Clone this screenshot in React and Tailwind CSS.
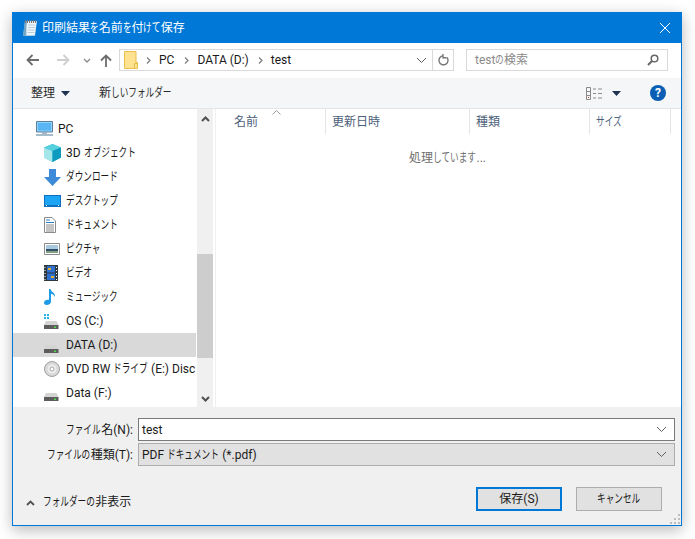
import React from "react"

const font = { fontFamily: 'Roboto, "Noto Sans CJK JP", sans-serif' }

// kana in the dialog's font are much narrower than in Noto, so squeeze only those runs
const Jp = ({text}) => (
    <span className="whitespace-nowrap">
        {text.split(/([\u3040-\u30ff]+)/).map((part, i) =>
            i % 2 === 1 ? (
                <span key={i} className="inline-block" style={{width: part.length * 8.7}}>
                    <span className="inline-block origin-left scale-x-[0.72]">{part}</span>
                </span>
            ) : (
                part
            )
        )}
    </span>
)

const NotepadIcon = () => (
    <svg width="16" height="18" viewBox="0 0 16 18">
        <path d="M3 2h12l-2 15H1z" fill="#a9cfe4"/>
        <path d="M3.5 2.5h11l-1.700 13.500H5z" fill="#eef4f8"/>
        <path d="M1 17 3 2h2L3.500 17z" fill="#6fa3c4"/>
        <path d="M6 6h7M6 8.500h7M5.500 11h7M5.500 13.500h7" stroke="#b9cfdd" strokeWidth="1"/>
        <path d="M3.500 1v3M5.500 1v3M7.500 1v3M9.500 1v3M11.500 1v3M13.500 1v3" stroke="#777" strokeWidth="1"/>
    </svg>
)

const FolderIcon = () => (
    <svg width="14" height="18" viewBox="0 0 14 18">
        <path d="M.5.500h11.500v11l1.500 0v6H.500z" fill="#ffe28f" stroke="#e7bf4a"/>
        <path d="M10.500 17.500v-5h3" fill="none" stroke="#e7bf4a"/>
    </svg>
)

const DriveIcon = ({win}) => (
    <svg width="16" height="16" viewBox="0 0 16 16">
        {win && <path d="M0 1h2v2H0zM3 1h2v2H3zM0 4h2v2H0zM3 4h2v2H3z" fill="#25b4e8"/>}
        <path d="M2 8h10.500l2 4H0z" fill="#d4d4d4"/>
        <path d="M0 12h14.500v4H0z" fill="#5c5c5c"/>
        <path d="M10 13.500h2v1.500h-2z" fill="#4be04b"/>
    </svg>
)

const icons = {
    pc: (
        <svg width="18" height="16" viewBox="0 0 18 16">
            <path d="M.5.500h16v10.500H.500z" fill="#8fd4fb" stroke="#5d7f99"/>
            <path d="M2 2h13v7.500H2z" fill="#5ab5f4"/>
            <path d="M6 11h5v2H6z" fill="#9fb4c4"/>
            <path d="M0 13h17v2H0z" fill="#a7bccb"/>
        </svg>
    ),
    cube: (
        <svg width="17" height="18" viewBox="0 0 17 18">
            <path d="M8.500 0 17 3.500v10L8.500 18 0 13.500v-10z" fill="#2bb6cf"/>
            <path d="M0 3.500 8.500 7v11L0 13.500z" fill="#a5e6ea"/>
            <path d="M8.500 0 17 3.500 8.500 7 0 3.500z" fill="#56d0dd"/>
            <path d="M17 3.500V13.500L8.500 18V7z" fill="#0f9bc0"/>
        </svg>
    ),
    down: (
        <svg width="17" height="17" viewBox="0 0 17 17">
            <path d="M5 0h7v8h5l-8.500 9L0 8h5z" fill="#3d8ad8"/>
        </svg>
    ),
    desktop: (
        <svg width="17" height="12" viewBox="0 0 17 12">
            <path d="M0 0h17v12H0z" fill="#0f6fc0"/>
            <path d="M1 1h15v9H1z" fill="#1ca5f5"/>
            <path d="M2 10.500h1M14 10.500h1" stroke="#fff"/>
        </svg>
    ),
    doc: (
        <svg width="12" height="16" viewBox="0 0 12 16">
            <path d="M.5.500H8L11.500 4v11.500H.500z" fill="#fff" stroke="#8a8a8a"/>
            <path d="M2 3h4M2 5.500h8" stroke="#2f7fc4"/>
            <path d="M2 8h8M2 10h8M2 12h8M2 14h8" stroke="#8a8a8a"/>
        </svg>
    ),
    pic: (
        <svg width="16" height="12" viewBox="0 0 16 12">
            <path d="M.5.500h15v11H.500z" fill="#fff" stroke="#8a8a8a"/>
            <path d="M2 2h12v4H2z" fill="#a8c8e0"/>
            <path d="M2 6h12v2H2z" fill="#30506a"/>
            <path d="M2 8h12v2H2z" fill="#7f9f80"/>
        </svg>
    ),
    video: (
        <svg width="14" height="16" viewBox="0 0 14 16">
            <path d="M0 0h14v16H0z" fill="#2f3a3f"/>
            <path d="M3 1h8v6.500H3z" fill="#2f6fd0"/>
            <path d="M3 8.500h8V15H3z" fill="#2f6fd0"/>
            <path d="M4 3h3v2H4zM7 11h3v2H7z" fill="#e0b030"/>
            <path d="M1 2v1M1 5v1M1 8v1M1 11v1M1 14v1M12.500 2v1M12.500 5v1M12.500 8v1M12.500 11v1M12.500 14v1" stroke="#fff"/>
        </svg>
    ),
    music: (
        <svg width="12" height="16" viewBox="0 0 12 16">
            <path d="M5 0h1.500c.5 3 5 3.500 4.500 8-.8-2-2.500-3-4-3.200V12.500C7 14.500 5 16 2.800 16 1 16 0 15 0 13.700 0 12 2 10.800 3.800 10.800c.5 0 .9.100 1.200.2z" fill="#1e9be8"/>
        </svg>
    ),
    os: <DriveIcon win/>,
    drive: <DriveIcon/>,
    dvd: (
        <svg width="16" height="16" viewBox="0 0 16 16">
            <circle cx="8" cy="8" r="7.500" fill="#d8d8d8" stroke="#a0a0a0"/>
            <circle cx="8" cy="8" r="4.500" fill="#ececec"/>
            <circle cx="8" cy="8" r="2" fill="#fff" stroke="#a8a8a8"/>
        </svg>
    ),
}

const navItems = [
    {label: "PC", icon: "pc", left: "pl-[23px]", gap: "w-[22px]"},
    {label: "3D オブジェクト", icon: "cube"},
    {label: "ダウンロード", icon: "down"},
    {label: "デスクトップ", icon: "desktop"},
    {label: "ドキュメント", icon: "doc"},
    {label: "ピクチャ", icon: "pic"},
    {label: "ビデオ", icon: "video"},
    {label: "ミュージック", icon: "music"},
    {label: "OS (C:)", icon: "os"},
    {label: "DATA (D:)", icon: "drive", selected: true},
    {label: "DVD RW ドライブ (E:) Disc", icon: "dvd"},
    {label: "Data (F:)", icon: "drive"},
]

const columns = [
    {label: "名前", width: "w-[110px]", pad: "pl-[18px]"},
    {label: "更新日時", width: "w-[144px]", pad: "pl-[6px]"},
    {label: "種類", width: "w-[120px]", pad: "pl-[6px]"},
    {label: "サイズ", width: "w-[81px]", pad: "pl-[6px]"},
]

const Chevron = ({className}) => (
    <svg width="11" height="7" viewBox="0 0 11 7" className={className}>
        <path d="M1 1l4.500 4.500L10 1" fill="none" stroke="#606060" strokeWidth="1"/>
    </svg>
)

const SmallCaret = () => (
    <svg width="9" height="5" viewBox="0 0 9 5"><path d="M0 0h9L4.500 5z" fill="#1f3252"/></svg>
)

const Sep = ({className}) => (
    <svg width="5" height="7" viewBox="0 0 5 7" className={className}>
        <path d="M1 .5l3 3-3 3" fill="none" stroke="#808080" strokeWidth="1.300"/>
    </svg>
)

const ScrollArrow = ({up}) => (
    <svg width="9" height="6" viewBox="0 0 9 6">
        <path d={up ? "M1 5l3.500-3.500L8 5" : "M1 1l3.500 3.500L8 1"} fill="none" stroke="#505050" strokeWidth="2"/>
    </svg>
)

export default function App() {
    return (
        <div className="w-[695px] h-[539px] bg-white pt-3 pl-3 overflow-hidden" style={font}>
            <div className="relative w-[670px] h-[514px] border border-[#0078d7] bg-[#f0f0f0] flex flex-col shadow-[0_4px_14px_rgba(0,0,0,0.28)] text-xs text-[#1a1a1a]">
                {/* title bar */}
                <div className="h-[30px] bg-[#0078d7] flex items-center pl-[9px] pr-[8px] text-white">
                    <NotepadIcon/>
                    <span className="ml-[4px]"><Jp text="印刷結果を名前を付けて保存"/></span>
                    <svg width="12" height="12" viewBox="0 0 12 12" className="ml-auto mr-[2px]">
                        <path d="M1 1l10 10M11 1 1 11" stroke="#fff" strokeWidth="1"/>
                    </svg>
                </div>

                {/* address row */}
                <div className="h-[35px] bg-white flex items-start pt-[6px]">
                    <svg width="14" height="12" viewBox="0 0 14 12" className="ml-[13px] mt-[5px]">
                        <path d="M13 6H2M6.500 1 1.500 6l5 5" fill="none" stroke="#6d6d6d" strokeWidth="1.800"/>
                    </svg>
                    <svg width="14" height="12" viewBox="0 0 14 12" className="ml-[16px] mt-[5px]">
                        <path d="M1 6h11M7.500 1l5 5-5 5" fill="none" stroke="#cfcfcf" strokeWidth="1.800"/>
                    </svg>
                    <svg width="8" height="5" viewBox="0 0 8 5" className="ml-[13px] mt-[9px]">
                        <path d="M1 1l3 3 3-3" fill="none" stroke="#8a8a8a" strokeWidth="1.300"/>
                    </svg>
                    <svg width="12" height="13" viewBox="0 0 12 13" className="ml-[9px] mt-[5px]">
                        <path d="M6 13V2M1 6.500 6 1.500l5 5" fill="none" stroke="#6d6d6d" strokeWidth="1.800"/>
                    </svg>
                    <div className="ml-[7px] w-[335px] h-[22px] border border-[#d9d9d9] flex items-center">
                        <span className="ml-[4px] flex"><FolderIcon/></span>
                        <Sep className="ml-[8px]"/>
                        <span className="ml-[8px]">PC</span>
                        <Sep className="ml-[10px]"/>
                        <span className="ml-[8px]">DATA (D:)</span>
                        <Sep className="ml-[9px]"/>
                        <span className="ml-[8px]">test</span>
                        <Chevron className="ml-auto mr-[5px]"/>
                        <div className="w-[21px] h-full border-l border-[#d9d9d9] flex items-center justify-center">
                            <svg width="11" height="12" viewBox="0 0 11 12">
                                <path d="M9 3.500A4.500 4.500 0 1 1 5.500 1.800M5 0v3.800h3.500" fill="none" stroke="#777" strokeWidth="1.400"/>
                            </svg>
                        </div>
                    </div>
                    <div className="ml-[12px] w-[202px] h-[22px] border border-[#d9d9d9] flex items-center pl-[8px] pr-[8px] text-[#8a8a8a]">
                        <Jp text="testの検索"/>
                        <svg width="12" height="12" viewBox="0 0 12 12" className="ml-auto">
                            <circle cx="7.500" cy="4.500" r="3.300" fill="none" stroke="#666" strokeWidth="1.500"/>
                            <path d="M5 7 1 11" stroke="#666" strokeWidth="2"/>
                        </svg>
                    </div>
                </div>

                {/* toolbar */}
                <div className="h-[31px] bg-[#f5f6f7] border-b border-[#e5e5e5] flex items-center text-[#2a2a2a]">
                    <span className="ml-[18px]">整理</span>
                    <span className="ml-[6px] flex"><SmallCaret/></span>
                    <span className="ml-[29px]"><Jp text="新しいフォルダー"/></span>
                    <svg width="17" height="13" viewBox="0 0 17 13" className="ml-auto">
                        <path d="M.5.500h4v12h-4zM.5 4.500h4M.5 8.500h4M7 2h3M12 2h4M7 6.500h3M12 6.500h4M7 11h3M12 11h4" fill="none" stroke="#8a8a8a"/>
                        <path d="M2 10h1v1H2z" fill="#d03030"/>
                    </svg>
                    <span className="ml-[9px] flex"><SmallCaret/></span>
                    <span className="ml-[29px] mr-[15px] w-4 h-4 rounded-full bg-[#0a5fb4] text-white text-[12px] font-bold flex items-center justify-center">?</span>
                </div>

                {/* browser area */}
                <div className="h-[298px] bg-white flex">
                    <div className="w-[183px] pt-2 overflow-hidden">
                        {navItems.map((item) => (
                            <div
                                key={item.label}
                                className={`h-6 flex items-center whitespace-nowrap ${item.left || "pl-[31px]"} ${item.selected ? "bg-[#d9d9d9]" : ""}`}
                            >
                                <span className={`${item.gap || "w-[22px]"} shrink-0 flex items-center`}>{icons[item.icon]}</span>
                                <Jp text={item.label}/>
                            </div>
                        ))}
                    </div>
                    <div className="w-[16px] ml-[1px] bg-[#f0f0f0] flex flex-col items-center">
                        <div className="h-[17px] flex items-center justify-center pt-[2px]"><ScrollArrow up/></div>
                        <div className="h-[128px]"></div>
                        <div className="w-full h-[104px] bg-[#cdcdcd]"></div>
                        <div className="mt-auto h-[17px] flex items-center justify-center"><ScrollArrow/></div>
                    </div>
                    <div className="flex-1 ml-[2px] border-l border-[#f0f0f0]">
                        <div className="relative h-[25px] flex text-[#4c607a]">
                            {columns.map((col) => (
                                <div key={col.label} className={`${col.width} ${col.pad} border-r border-[#e5e5e5] flex items-center`}>
                                    <Jp text={col.label}/>
                                </div>
                            ))}
                            <svg width="9" height="5" viewBox="0 0 9 5" className="absolute left-[56px] top-[1px]">
                                <path d="M.5 4.500l4-4 4 4" fill="none" stroke="#9a9a9a"/>
                            </svg>
                        </div>
                        <div className="mt-[16px] pl-[193px] text-[#6d6d6d]"><Jp text="処理しています..."/></div>
                    </div>
                </div>

                {/* file form */}
                <div className="flex-1 flex flex-col">
                    <div className="mt-[11px] flex items-center h-[23px]">
                        <span className="w-[120px] text-right"><Jp text="ファイル名(N):"/></span>
                        <div className="ml-[5px] w-[537px] h-[23px] bg-white border border-[#7a7a7a] flex items-center pl-[3px] pr-[7px]">
                            <span>test</span>
                            <Chevron className="ml-auto"/>
                        </div>
                    </div>
                    <div className="mt-[2px] flex items-center h-[23px]">
                        <span className="w-[120px] text-right"><Jp text="ファイルの種類(T):"/></span>
                        <div className="ml-[5px] w-[537px] h-[23px] bg-[#e1e1e1] border border-[#adadad] flex items-center pl-[3px] pr-[7px]">
                            <Jp text="PDF ドキュメント (*.pdf)"/>
                            <Chevron className="ml-auto"/>
                        </div>
                    </div>
                    <div className="mt-[21px] flex items-start">
                        <span className="ml-[13px] w-[9px] mt-[13px] flex">
                            <svg width="9" height="6" viewBox="0 0 9 6"><path d="M1 5l3.500-3.500L8 5" fill="none" stroke="#505050" strokeWidth="1.800"/></svg>
                        </span>
                        <span className="ml-[8px] mt-[7px]"><Jp text="フォルダーの非表示"/></span>
                        <button className="ml-auto w-[86px] h-[24px] bg-[#e1e1e1] border-2 border-[#0078d7] text-xs"><Jp text="保存(S)"/></button>
                        <button className="ml-[14px] mr-[19px] w-[86px] h-[24px] bg-[#e1e1e1] border border-[#adadad] text-xs"><Jp text="キャンセル"/></button>
                    </div>
                </div>

                {/* resize grip */}
                <svg width="12" height="12" viewBox="0 0 12 12" className="absolute right-0 bottom-0">
                    <path d="M9 1h2v2H9zM5 5h2v2H5zM9 5h2v2H9zM1 9h2v2H1zM5 9h2v2H5zM9 9h2v2H9z" fill="#bdbdbd"/>
                </svg>
            </div>
        </div>
    )
}
